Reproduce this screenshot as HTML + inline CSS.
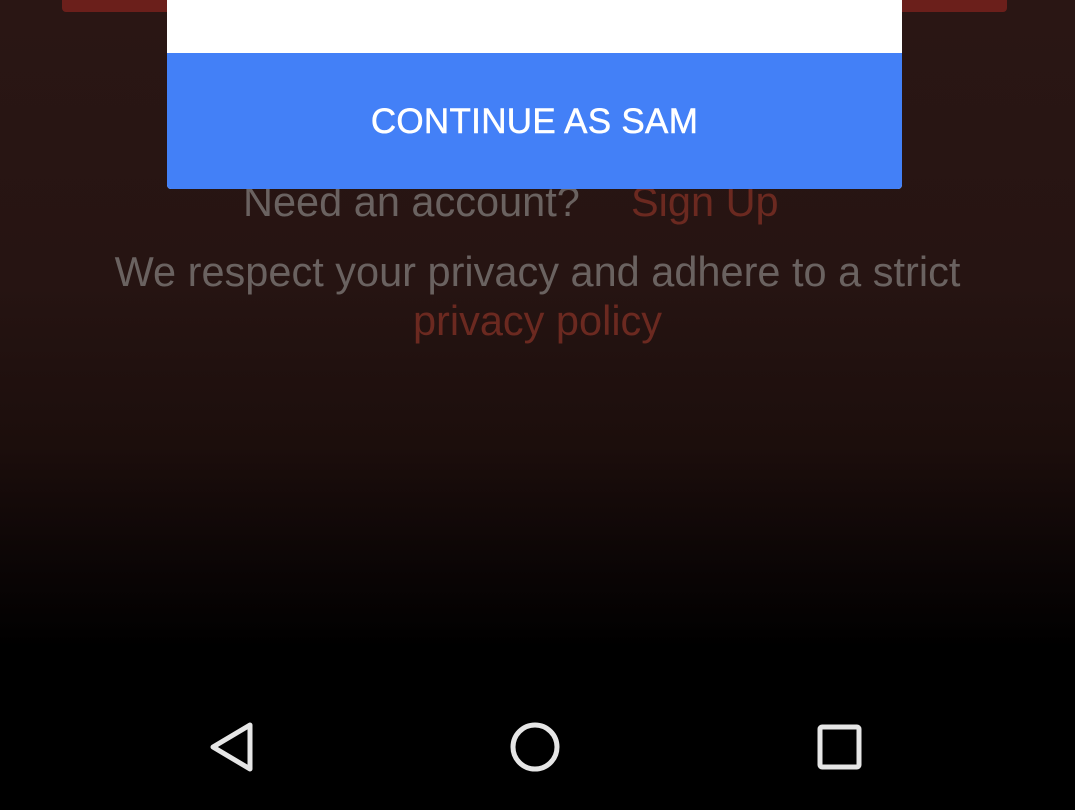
<!DOCTYPE html>
<html><head><style>
html,body{margin:0;padding:0;width:1075px;height:810px;overflow:hidden;font-family:"Liberation Sans",sans-serif}
body{background:linear-gradient(180deg,#2a1614 0%,#261412 35%,#1c0e0c 55%,#0b0505 70%,#000 80%,#000 100%);position:relative}
.rb{position:absolute;top:0;height:12px;background:#6b1f1b;border-radius:0 0 4px 4px}
.card{position:absolute;left:167px;top:0;width:735px;height:189px;background:#fff;border-radius:0 0 4px 4px;overflow:hidden}
.btn{position:absolute;left:0;top:53px;width:735px;height:136px;background:#4380f7;color:#fff;font-size:35px;text-align:center;line-height:138px;letter-spacing:0.3px;-webkit-text-stroke:0.5px #fff}
.t{position:absolute;font-size:41.5px;color:#6a6260;white-space:nowrap}
.r{color:#6b2920}
</style></head><body>
<div class="rb" style="left:62px;width:110px"></div>
<div class="rb" style="left:897px;width:110px"></div>
<div class="t" style="left:243px;top:178px;font-size:41.5px">Need an account?</div>
<div class="t r" style="left:631px;top:178px">Sign Up</div>
<div class="card"><div class="btn">CONTINUE AS SAM</div></div>
<div class="t" style="left:0;width:1075px;text-align:center;top:248px">We respect your privacy and adhere to a strict</div>
<div class="t r" style="left:0;width:1075px;text-align:center;top:297px">privacy policy</div>
<svg width="1075" height="810" style="position:absolute;left:0;top:0">
<g fill="none" stroke="#e6e6e6" stroke-width="5" stroke-linejoin="round">
<path d="M250 725 L250 769 L213 747 Z"/>
<ellipse cx="535" cy="747" rx="22" ry="22"/>
<rect x="820" y="727" width="39" height="40" rx="2"/>
</g></svg>
</body></html>
